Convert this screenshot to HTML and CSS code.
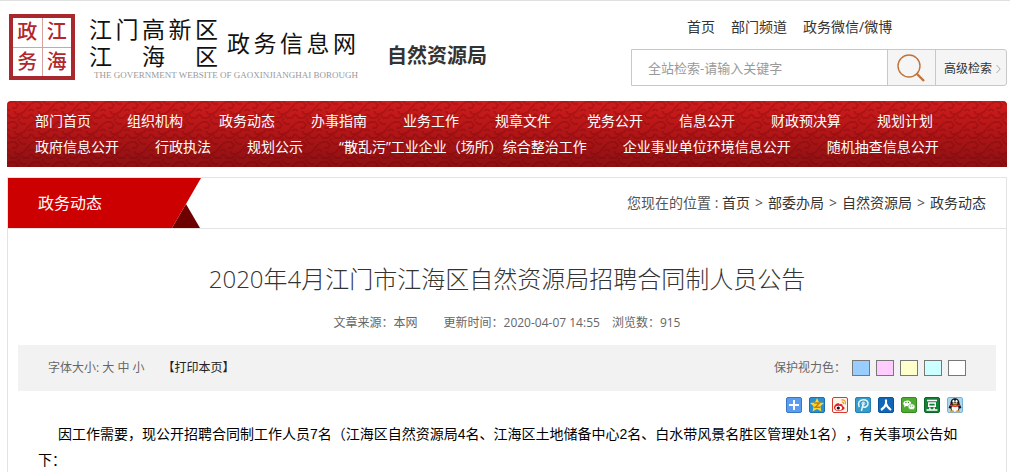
FILE: index.html
```html
<!DOCTYPE html>
<html lang="zh-CN">
<head>
<meta charset="utf-8">
<title>2020年4月江门市江海区自然资源局招聘合同制人员公告</title>
<link rel="stylesheet" href="styles.css">
</head>
<body>
<header class="header">
  <div class="logo">
    <div class="seal"><span>政</span><span>江</span><span>务</span><span>海</span></div>
    <div class="brand">
      <div class="brand-names">
        <div class="district">
          <div class="spread"><span>江</span><span>门</span><span>高</span><span>新</span><span>区</span></div>
          <div class="spread"><span>江</span><span>海</span><span>区</span></div>
        </div>
        <div class="site-name spread"><span>政</span><span>务</span><span>信</span><span>息</span><span>网</span></div>
      </div>
      <div class="english">THE GOVERNMENT WEBSITE OF GAOXINJIANGHAI BOROUGH</div>
    </div>
    <h2 class="bureau">自然资源局</h2>
  </div>
  <div class="header-right">
    <nav class="top-links"><a href="#">首页</a><a href="#">部门频道</a><a href="#">政务微信/微博</a></nav>
    <form class="search">
      <input class="search-input" type="text" aria-label="全站检索" placeholder="全站检索-请输入关键字">
      <button class="search-button" type="button" aria-label="搜索">
        <svg width="30" height="30" viewBox="0 0 30 30" fill="none" stroke="#c0743c"><circle cx="13" cy="13" r="11" stroke-width="1.4"/><path d="M20.5 20.5 28 28" stroke-width="2.4"/></svg>
      </button>
      <a class="advanced" href="#">高级检索<svg width="5" height="10" viewBox="0 0 5 10" fill="none" stroke="#aaa"><path d="M.5 1 4.2 5 .5 9"/></svg></a>
    </form>
  </div>
</header>

<nav class="main-nav">
  <svg class="nav-pattern" width="100%" height="100%" aria-hidden="true">
    <defs>
      <linearGradient id="navRed" x1="0" y1="0" x2="0" y2="1"><stop offset="0" stop-color="#d01c1c"/><stop offset=".5" stop-color="#b01517"/><stop offset="1" stop-color="#8c1013"/></linearGradient>
      <pattern id="scroll" width="24" height="20" patternUnits="userSpaceOnUse">
        <g fill="none" stroke="#5a0000" stroke-opacity=".22" stroke-width="2" stroke-linejoin="round">
          <path d="M0 3 3 1H8L11 4 9 7H5M24 3 20 7 17 11 13 13H9L7 10M0 13 4 17H9L13 13M24 13 21 17H16L14 14M12 0 15 3H19M0 8 3 10M21 10 24 8M11 20 13 17"/>
        </g>
      </pattern>
    </defs>
    <rect width="100%" height="100%" fill="url(#navRed)"/>
    <rect width="100%" height="100%" fill="url(#scroll)"/>
  </svg>
  <div class="nav-row"><a href="#">部门首页</a><a href="#">组织机构</a><a href="#">政务动态</a><a href="#">办事指南</a><a href="#">业务工作</a><a href="#">规章文件</a><a href="#">党务公开</a><a href="#">信息公开</a><a href="#">财政预决算</a><a href="#">规划计划</a></div>
  <div class="nav-row"><a href="#">政府信息公开</a><a href="#">行政执法</a><a href="#">规划公示</a><a href="#">“散乱污”工业企业（场所）综合整治工作</a><a href="#">企业事业单位环境信息公开</a><a href="#">随机抽查信息公开</a></div>
</nav>

<main class="panel">
  <div class="panel-head">
    <div class="tab">
      <svg class="tab-shape" width="194" height="50" viewBox="0 0 194 50" aria-hidden="true"><path d="M178 26 192 50H164Z" fill="#6d0000"/><path d="M0 0H193L178 26 164 50H0Z" fill="#c00"/></svg>
      <span class="tab-label">政务动态</span>
    </div>
    <div class="crumbs">您现在的位置 : <a href="#">首页</a><span class="sep">&gt;</span><a href="#">部委办局</a><span class="sep">&gt;</span><a href="#">自然资源局</a><span class="sep">&gt;</span><a href="#">政务动态</a></div>
  </div>
  <article class="article">
    <h1 class="title">2020年4月江门市江海区自然资源局招聘合同制人员公告</h1>
    <div class="meta"><span class="source">文章来源：本网</span><span>更新时间：2020-04-07 14:55</span><span>浏览数：915</span></div>
    <div class="tools">
      <div class="tool-group"><span>字体大小: <a href="#">大</a> <a href="#">中</a> <a href="#">小</a></span><a class="print" href="#">【打印本页】</a></div>
      <div class="swatches"><span>保护视力色：</span><button class="swatch blue" type="button" aria-label="蓝色"></button><button class="swatch pink" type="button" aria-label="粉色"></button><button class="swatch yellow" type="button" aria-label="黄色"></button><button class="swatch cyan" type="button" aria-label="青色"></button><button class="swatch white" type="button" aria-label="白色"></button></div>
    </div>
    <div class="share">
      <a href="#" aria-label="分享"><svg viewBox="0 0 16 16"><rect x=".5" y=".5" width="15" height="15" rx="1.5" fill="#5a9df0" stroke="#3a76c4"/><path d="M8 3V13M3 8H13" stroke="#fff" stroke-width="2"/></svg></a>
      <a href="#" aria-label="QQ空间"><svg viewBox="0 0 16 16"><rect x=".5" y=".5" width="15" height="15" rx="1.5" fill="#2b8fd0" stroke="#1c6fb0"/><path d="M8 1 10.1 5.4 15 6 11.4 9.3 12.4 14.5 8 12 3.6 14.5 4.6 9.3 1 6 5.9 5.4Z" fill="#ffd42a"/><path d="M5.2 6H10.5L6.2 10.3H11" fill="none" stroke="#c2810a" stroke-width="1.4"/></svg></a>
      <a href="#" aria-label="新浪微博"><svg viewBox="0 0 16 16"><rect x=".5" y=".5" width="15" height="15" rx="1.5" fill="#fff3ea" stroke="#d63a2c"/><path d="M2 10.5C2 8 5 5.7 6.8 6.2 7.6 6.5 7.3 7.4 7.3 7.4S10 6.4 10.5 7.8C10.8 8.7 10.2 9 11 9.3 15 11.5 10.5 14 7 14S2 12.6 2 10.5Z" fill="#d9252b"/><ellipse cx="6.7" cy="11" rx="3.4" ry="2.3" fill="#fff"/><circle cx="6.3" cy="11" r="1.6" fill="#111"/><path d="M9.3 3C12.5 2.3 14 4.7 13.3 7.3M9.8 5.1C11.4 4.8 11.9 6 11.5 7" fill="none" stroke="#f29a26" stroke-width="1.2"/></svg></a>
      <a href="#" aria-label="腾讯朋友"><svg viewBox="0 0 16 16"><rect x=".5" y=".5" width="15" height="15" rx="1.5" fill="#369bc8" stroke="#2382b0"/><path d="M4.3 10.2C2.1 6 4.6 2.7 8.2 2.7 11.3 2.7 13 4.6 13 6.8 13 9.5 9.6 11 7.4 9.6M8.5 5.5 6.4 14" fill="none" stroke="#e4f7ff" stroke-width="1.5"/><circle cx="8.4" cy="6.5" r="1.5" fill="none" stroke="#e4f7ff"/></svg></a>
      <a href="#" aria-label="人人网"><svg viewBox="0 0 16 16"><rect x=".5" y=".5" width="15" height="15" rx="1.5" fill="#1266b8" stroke="#0b5299"/><path d="M8 2.5V6.5Q7.2 10.3 3 13M8 6.5Q9 10.3 13 13" fill="none" stroke="#fff" stroke-width="2.1"/></svg></a>
      <a href="#" aria-label="微信"><svg viewBox="0 0 16 16"><rect x=".5" y=".5" width="15" height="15" rx="1.5" fill="#4faa32" stroke="#37881f"/><path d="M3 10.6 3.5 8.7C.9 6.6 3 3.5 6.3 3.5S11 6 9.8 7.9C8.5 9.3 6.7 9.3 5.1 9Z" fill="#fff"/><path d="M13.3 13.2 12.9 11.9C15.3 9.8 13.6 7 10.7 7S6.3 9.5 7.6 11.2C8.7 12.7 10.3 12.7 11.6 12.3Z" fill="#fff" stroke="#4faa32" stroke-width=".6"/><g fill="#37881f"><circle cx="4.9" cy="5.5" r=".7"/><circle cx="7.5" cy="5.5" r=".7"/><circle cx="9.5" cy="9" r=".6"/><circle cx="11.8" cy="9" r=".6"/></g></svg></a>
      <a href="#" aria-label="豆瓣"><svg viewBox="0 0 16 16"><rect x=".5" y=".5" width="15" height="15" rx="1.5" fill="#138036" stroke="#0a6526"/><path d="M3 3.5H13M4.7 6H11.3V9.3H4.7ZM5.5 10.5 6.5 13M10.5 10.5 9.5 13M2.5 13H13.5" fill="none" stroke="#fff" stroke-width="1.4"/></svg></a>
      <a href="#" aria-label="QQ好友"><svg viewBox="0 0 16 16"><rect x=".5" y=".5" width="15" height="15" rx="1.5" fill="#a9d8f0" stroke="#79b4d6"/><path d="M3.5 6.5C3.5-.4 12.5-.4 12.5 6.5L14.5 11 12.5 11.5 11.5 14H4.5L3.5 11.5 1.5 11Z" fill="#161616"/><ellipse cx="8" cy="11.2" rx="3.4" ry="3.3" fill="#fff"/><ellipse cx="6.5" cy="4.3" rx="1.1" ry="1.5" fill="#fff"/><ellipse cx="9.5" cy="4.3" rx="1.1" ry="1.5" fill="#fff"/><ellipse cx="8" cy="6.7" rx="2.7" ry=".9" fill="#f6a21a"/><path d="M3.2 8Q8 10.5 12.8 8" fill="none" stroke="#e33222" stroke-width="1.7"/><path d="M3 14.3H7M9 14.3H13" stroke="#f6a21a" stroke-width="1.8"/></svg></a>
    </div>
    <p class="text">因工作需要，现公开招聘合同制工作人员7名（江海区自然资源局4名、江海区土地储备中心2名、白水带风景名胜区管理处1名），有关事项公告如下：</p>
  </article>
</main>
</body>
</html>
```

FILE: styles.css
```css
* { box-sizing: border-box; }

body {
  margin: 0;
  padding: 0 3px 0 7px;
  overflow-x: hidden;
  border-top: 1px solid #e0e0e0;
  background: #fff;
  color: #333;
  font: 14px/26px "Open Sans", "Noto Sans CJK SC", sans-serif;
  text-spacing-trim: space-all;
}

a { color: inherit; text-decoration: none; }
button { padding: 0; cursor: pointer; }

.header {
  display: flex;
  justify-content: space-between;
  height: 100px;
}

.logo { display: flex; align-items: flex-start; padding: 13px 0 0 2px; }

.seal {
  display: grid;
  grid-template-columns: 1fr 1fr;
  gap: 1px;
  width: 66px;
  height: 66px;
  border: 4px solid #a8282e;
  background: #d9a0a0;
}

.seal span {
  background: #fff;
  color: #b3262b;
  font-size: 20px;
  font-weight: 500;
  line-height: 28px;
  text-align: center;
}

.brand { padding: 2px 0 0 14px; color: #111; white-space: nowrap; }
.brand-names { display: flex; align-items: center; gap: 9px; height: 54px; }
.spread { display: flex; justify-content: space-between; width: 129px; }
.district { font-size: 23px; line-height: 27px; }
.site-name { font-size: 23px; }

.english {
  padding-left: 5px;
  color: #999;
  font: 9px/11px "Liberation Serif", serif;
}

.bureau {
  margin: 27px 0 0 29px;
  font-size: 20px;
  line-height: 30px;
  white-space: nowrap;
}

.header-right { width: 376px; padding-top: 13px; }
.top-links { display: flex; gap: 16px; padding-left: 56px; }

.search {
  display: flex;
  height: 37px;
  margin-top: 9px;
  border: 1px solid #c8c8c8;
  border-radius: 0 3px 3px 0;
  background: #f5f5f5;
}

.search-input {
  flex: 1;
  min-width: 0;
  padding: 0 16px;
  border: 0;
  background: #fff;
  font: 13px "Open Sans", "Noto Sans CJK SC", sans-serif;
}

.search-input::placeholder { color: #999; }

.search-button {
  display: grid;
  place-items: center;
  width: 49px;
  border: solid #c8c8c8;
  border-width: 0 1px;
  background: #f5f5f5;
}

.advanced {
  display: flex;
  align-items: center;
  gap: 4px;
  padding: 2px 5px 0 8px;
  font-size: 12px;
}

.main-nav {
  position: relative;
  overflow: hidden;
  min-height: 66px;
  padding: 7px 28px;
  border-radius: 4px 4px 0 0;
  color: #fff;
}

.nav-pattern { position: absolute; inset: 0; }
.nav-row { position: relative; display: flex; gap: 36px; white-space: nowrap; }

.panel { margin-top: 10px; border: 1px solid #e3e3e3; border-bottom: 0; }

.panel-head {
  display: flex;
  justify-content: space-between;
  height: 51px;
  border-bottom: 1px solid #e3e3e3;
  line-height: 50px;
}

.tab { position: relative; width: 194px; padding-left: 30px; color: #fff; font-size: 16px; }
.tab-shape { position: absolute; top: 0; left: 0; }
.tab-label { position: relative; }

.crumbs { padding-right: 20px; color: #555; }
.crumbs a { color: #333; }
.sep { padding: 0 5px; }

.article { padding: 30px 10px 0; }

.title {
  margin: 0;
  font-size: 24px;
  font-weight: 300;
  line-height: 40px;
  text-align: center;
}

.meta {
  display: flex;
  justify-content: center;
  gap: 12px;
  margin-top: 11px;
  color: #666;
  font-size: 12px;
}

.source { padding-right: 14px; }

.tools {
  display: flex;
  align-items: center;
  justify-content: space-between;
  height: 46px;
  margin-top: 9px;
  padding: 0 30px;
  background: #f2f2f2;
  color: #666;
  font-size: 12px;
}

.tool-group { display: flex; gap: 18px; }
.print { color: #222; }
.swatches { display: flex; align-items: center; gap: 6px; }
.swatch { width: 18px; height: 16px; border: 1px solid #777; }
.blue { background: #9cf; }
.pink { background: #fcf; }
.yellow { background: #ffc; }
.cyan { background: #cff; }
.white { background: #fff; }

.share { display: flex; justify-content: flex-end; gap: 7px; padding: 6px 33px 0 0; }
.share a, .share svg { display: block; width: 16px; height: 16px; }

.text {
  margin: 8px 30px 0 20px;
  color: #000;
  font-family: "Liberation Sans", "Noto Sans CJK SC", sans-serif;
  text-indent: 20px;
}
```
